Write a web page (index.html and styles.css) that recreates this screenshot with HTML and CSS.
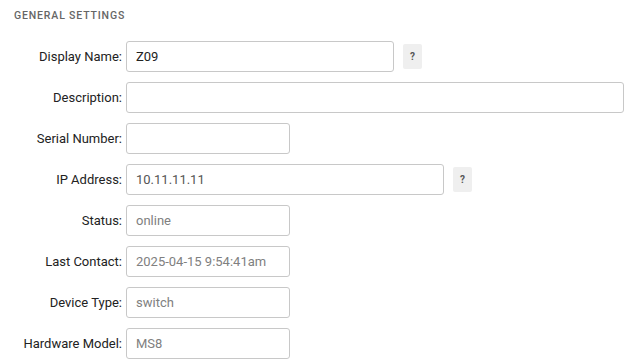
FILE: index.html
```html
<!DOCTYPE html>
<html>
	<head>
		<meta charset="utf-8">
		<title>General Settings</title>
		<link rel="stylesheet" href="styles.css">
	</head>
	<body>
		<div class="panel">
			<h4 class="title">General Settings</h4>
			<div class="form">
				<label class="lbl">Display Name:</label>
				<div class="field">
					<input class="inp w-md" type="text" value="Z09">
					<span class="help">?</span>
				</div>

				<label class="lbl">Description:</label>
				<div class="field">
					<input class="inp w-full" type="text" value="">
				</div>

				<label class="lbl">Serial Number:</label>
				<div class="field">
					<input class="inp w-sm" type="text" value="">
				</div>

				<label class="lbl">IP Address:</label>
				<div class="field">
					<input class="inp w-lg ip" type="text" value="10.11.11.11">
					<span class="help">?</span>
				</div>

				<label class="lbl">Status:</label>
				<div class="field">
					<input class="inp w-sm ro" type="text" value="online" readonly>
				</div>

				<label class="lbl">Last Contact:</label>
				<div class="field">
					<input class="inp w-sm ro" type="text" value="2025-04-15 9:54:41am" readonly>
				</div>

				<label class="lbl">Device Type:</label>
				<div class="field">
					<input class="inp w-sm ro" type="text" value="switch" readonly>
				</div>

				<label class="lbl">Hardware Model:</label>
				<div class="field">
					<input class="inp w-sm ro" type="text" value="MS8" readonly>
				</div>
			</div>
		</div>
	</body>
</html>
```
FILE: styles.css
```css
*{
	padding: 0;
	margin: 0;
	box-sizing: border-box;
}
body{
	background: #fff;
	font-family: Roboto, "Liberation Sans", sans-serif;
	color: #222;
}
.panel{
	padding: 10px 0 0 0;
}
.title{
	font: 500 10.5px/12px Roboto, sans-serif;
	text-transform: uppercase;
	letter-spacing: 0.85px;
	color: #666;
	padding-left: 14px;
	height: 31px;
}
.form{
	display: grid;
	grid-template-columns: 122px 1fr;
	column-gap: 4px;
	row-gap: 10px;
}
.lbl{
	font-size: 13px;
	line-height: 31px;
	text-align: right;
	color: #222;
	white-space: nowrap;
}
.field{
	display: flex;
	align-items: center;
	gap: 9px;
}
.inp{
	height: 31px;
	border: 1px solid #c8c8c8;
	border-radius: 3px;
	padding: 0 9px;
	font: 13px Roboto, sans-serif;
	color: #222;
	background: #fff;
	outline: none;
}
.w-sm{ width: 164px; }
.w-md{ width: 268px; }
.w-lg{ width: 318px; }
.w-full{ width: 498px; }
.ip{
	color: #555;
}
.ro{
	color: #808080;
}
.help{
	width: 19px;
	height: 25px;
	background: #efefef;
	border-radius: 2px;
	font: bold 10px/25px Roboto, sans-serif;
	color: #555;
	text-align: center;
}
```
